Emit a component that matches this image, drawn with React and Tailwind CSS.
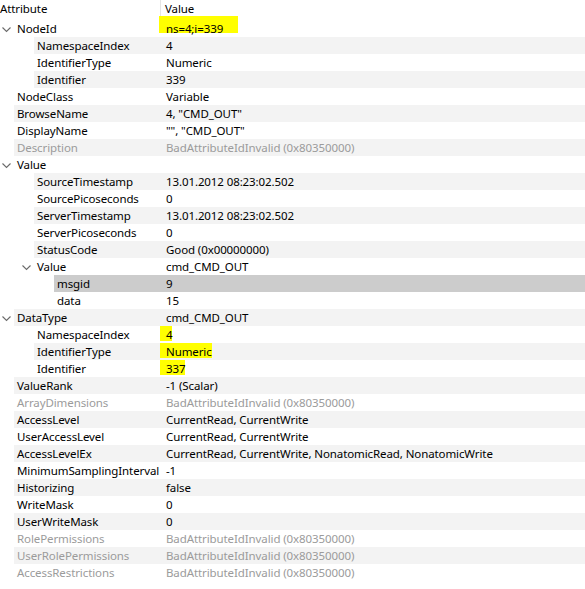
import React from "react";

const ROWS = [
  { level: 0, label: "NodeId", value: "ns=4;i=339", open: true, mark: "top" },
  { level: 1, label: "NamespaceIndex", value: "4" },
  { level: 1, label: "IdentifierType", value: "Numeric" },
  { level: 1, label: "Identifier", value: "339" },
  { level: 0, label: "NodeClass", value: "Variable" },
  { level: 0, label: "BrowseName", value: '4, "CMD_OUT"' },
  { level: 0, label: "DisplayName", value: '"", "CMD_OUT"' },
  { level: 0, label: "Description", value: "BadAttributeIdInvalid (0x80350000)", dim: true },
  { level: 0, label: "Value", value: "", open: true },
  { level: 1, label: "SourceTimestamp", value: "13.01.2012 08:23:02.502" },
  { level: 1, label: "SourcePicoseconds", value: "0" },
  { level: 1, label: "ServerTimestamp", value: "13.01.2012 08:23:02.502" },
  { level: 1, label: "ServerPicoseconds", value: "0" },
  { level: 1, label: "StatusCode", value: "Good (0x00000000)" },
  { level: 1, label: "Value", value: "cmd_CMD_OUT", open: true },
  { level: 2, label: "msgid", value: "9", selected: true },
  { level: 2, label: "data", value: "15" },
  { level: 0, label: "DataType", value: "cmd_CMD_OUT", open: true },
  { level: 1, label: "NamespaceIndex", value: "4", mark: "box" },
  { level: 1, label: "IdentifierType", value: "Numeric", mark: "box" },
  { level: 1, label: "Identifier", value: "337", mark: "box" },
  { level: 0, label: "ValueRank", value: "-1 (Scalar)" },
  { level: 0, label: "ArrayDimensions", value: "BadAttributeIdInvalid (0x80350000)", dim: true },
  { level: 0, label: "AccessLevel", value: "CurrentRead, CurrentWrite" },
  { level: 0, label: "UserAccessLevel", value: "CurrentRead, CurrentWrite" },
  { level: 0, label: "AccessLevelEx", value: "CurrentRead, CurrentWrite, NonatomicRead, NonatomicWrite" },
  { level: 0, label: "MinimumSamplingInterval", value: "-1" },
  { level: 0, label: "Historizing", value: "false" },
  { level: 0, label: "WriteMask", value: "0" },
  { level: 0, label: "UserWriteMask", value: "0" },
  { level: 0, label: "RolePermissions", value: "BadAttributeIdInvalid (0x80350000)", dim: true },
  { level: 0, label: "UserRolePermissions", value: "BadAttributeIdInvalid (0x80350000)", dim: true },
  { level: 0, label: "AccessRestrictions", value: "BadAttributeIdInvalid (0x80350000)", dim: true },
];

// gutter before the striped area and width of the label column, per level
const GUTTER = ["w-[14px]", "w-[34px]", "w-[54px]"];
const LABEL_W = ["w-[152px]", "w-[132px]", "w-[112px]"];

const Chevron = () => (
  <svg width="9" height="9" viewBox="0 0 9 9" className="absolute right-[3px] top-[5px]">
    <polyline points="0.5,2.5 4.5,6.5 8.5,2.5" fill="none" stroke="#6b6b6b" strokeWidth="1.1" />
  </svg>
);

const Row = ({ row, index }) => {
  const striped = index % 2 === 1;
  let bg = "bg-white";
  if (row.selected) bg = "bg-[#cccccc]";
  else if (striped) bg = "bg-[#f3f3f3]";
  const color = row.dim ? "text-[#9b9b9b]" : "text-black";

  return (
    <div className="flex h-[17px]">
      <div className={`relative shrink-0 ${GUTTER[row.level]}`}>{row.open && <Chevron />}</div>
      <div className={`flex flex-1 ${bg} ${color}`}>
        <div className={`shrink-0 pl-[3px] whitespace-nowrap ${LABEL_W[row.level]}`}>{row.label}</div>
        <div className="relative whitespace-nowrap">
          {row.mark === "top" && (
            <span className="absolute left-[-7px] top-[-4px] h-[17px] w-[79px] bg-[#ffff00]" />
          )}
          {row.mark === "box" ? (
            <span className="relative -ml-[6px] pl-[6px] inline-block h-[15px] bg-[#ffff00]">{row.value}</span>
          ) : (
            <span className="relative">{row.value}</span>
          )}
        </div>
      </div>
    </div>
  );
};

export default function App() {
  return (
    <div
      className="w-[585px] h-[589px] bg-white overflow-hidden text-[11.5px] tracking-[-0.1px] leading-[17px] text-black"
      style={{ fontFamily: '"Noto Sans", "Open Sans", sans-serif' }}
    >
      <div className="flex h-[20px]">
        <div className="w-[161px] shrink-0 border-r border-[#e5e5e5] h-[18px]">Attribute</div>
        <div className="pl-[4px]">Value</div>
      </div>
      {ROWS.map((row, i) => (
        <Row key={i} row={row} index={i} />
      ))}
    </div>
  );
}
